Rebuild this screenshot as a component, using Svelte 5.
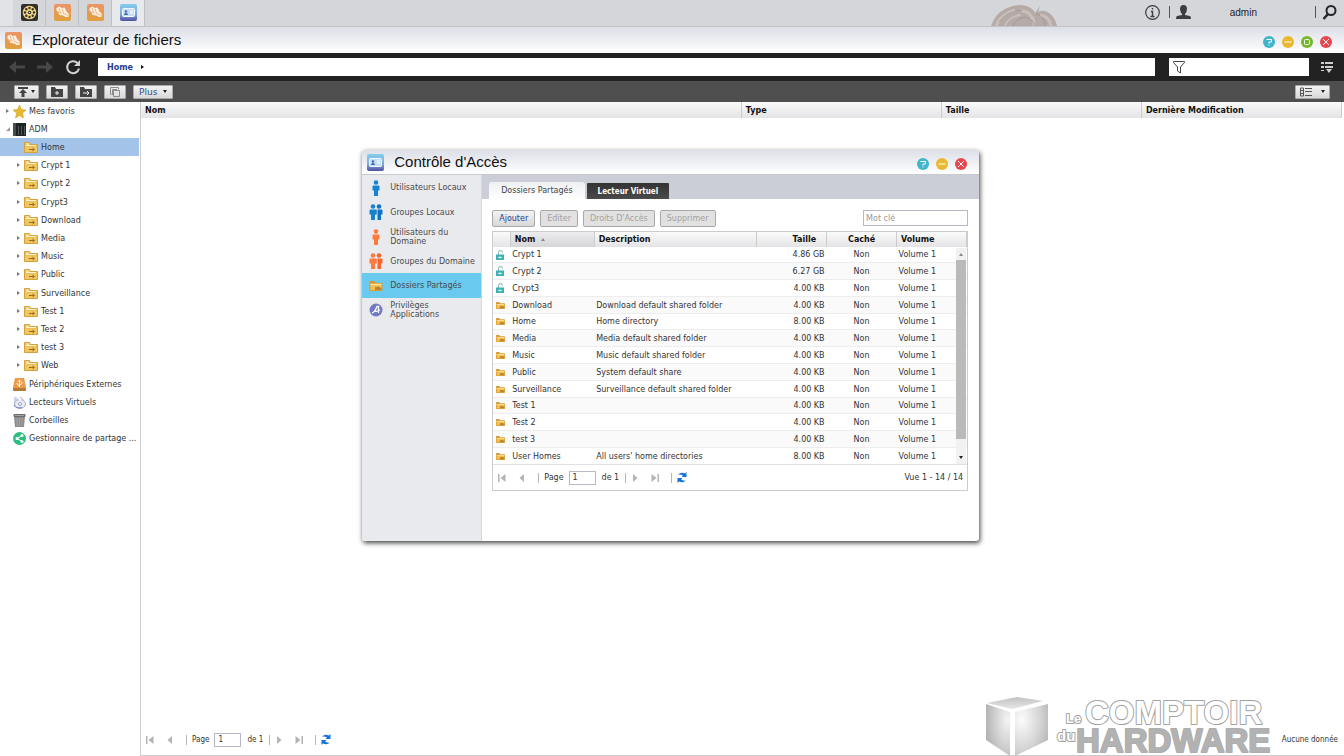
<script lang="ts">
  type Folder = { name: string; description?: string; size: string; locked?: boolean };

  const apps = ['settings', 'explorer', 'explorer', 'access'];

  const shares = [
    'Home', 'Crypt 1', 'Crypt 2', 'Crypt3', 'Download', 'Media', 'Music',
    'Public', 'Surveillance', 'Test 1', 'Test 2', 'test 3', 'Web',
  ];

  const places = [
    { label: 'Périphériques Externes', icon: 'usb' },
    { label: 'Lecteurs Virtuels', icon: 'disc' },
    { label: 'Corbeilles', icon: 'trash' },
    { label: 'Gestionnaire de partage ...', icon: 'share' },
  ];

  const menu = [
    { label: 'Utilisateurs Locaux', icon: 'user-blue' },
    { label: 'Groupes Locaux', icon: 'group-blue' },
    { label: 'Utilisateurs du Domaine', icon: 'user-orange' },
    { label: 'Groupes du Domaine', icon: 'group-orange' },
    { label: 'Dossiers Partagés', icon: 'folder' },
    { label: 'Privilèges Applications', icon: 'apps' },
  ];

  const folders: Folder[] = [
    { name: 'Crypt 1', size: '4.86 GB', locked: true },
    { name: 'Crypt 2', size: '6.27 GB', locked: true },
    { name: 'Crypt3', size: '4.00 KB', locked: true },
    { name: 'Download', description: 'Download default shared folder', size: '4.00 KB' },
    { name: 'Home', description: 'Home directory', size: '8.00 KB' },
    { name: 'Media', description: 'Media default shared folder', size: '4.00 KB' },
    { name: 'Music', description: 'Music default shared folder', size: '4.00 KB' },
    { name: 'Public', description: 'System default share', size: '4.00 KB' },
    { name: 'Surveillance', description: 'Surveillance default shared folder', size: '4.00 KB' },
    { name: 'Test 1', size: '4.00 KB' },
    { name: 'Test 2', size: '4.00 KB' },
    { name: 'test 3', size: '4.00 KB' },
    { name: 'User Homes', description: "All users' home directories", size: '8.00 KB' },
  ];

  let selectedShare = $state('Home');
  let selectedMenu = $state('Dossiers Partagés');
  let keyword = $state('');
  let filter = $state('');
  let mainPage = $state('1');
  let sharePage = $state('1');
</script>

<svelte:head>
  <title>Explorateur de fichiers</title>
</svelte:head>

{#snippet person(x: number, color: string)}
  <g transform="translate({x} 0)" fill={color}>
    <circle cx="4" cy="2.500" r="2.300" />
    <path d="M.5 6.500q0-1 1-1h5q1 0 1 1v4H6V16H2v-5.500H.5z" />
  </g>
{/snippet}

{#snippet appIcon(kind: string, size: number)}
  <svg width={size} height={size} viewBox="0 0 17 17" aria-hidden="true">
    {#if kind === 'settings'}
      <rect width="17" height="17" rx="2" fill="#33302b" />
      <circle cx="8.500" cy="8.500" r="6.800" fill="#f2d984" />
      <g fill="#33302b">
        <circle cx="8.500" cy="4" r="1.200" />
        <circle cx="8.500" cy="13" r="1.200" />
        <circle cx="4" cy="8.500" r="1.200" />
        <circle cx="13" cy="8.500" r="1.200" />
        <circle cx="5.300" cy="5.300" r="1.200" />
        <circle cx="11.700" cy="5.300" r="1.200" />
        <circle cx="5.300" cy="11.700" r="1.200" />
        <circle cx="11.700" cy="11.700" r="1.200" />
        <circle cx="8.500" cy="8.500" r="1.800" />
      </g>
      <circle cx="8.500" cy="8.500" r=".8" fill="#f2d984" />
    {:else if kind === 'explorer'}
      <rect width="17" height="17" rx="2" fill="url(#orange)" />
      <path d="M2.500 4l3-1.500 2 1.500 3-.5 2 4 2.500 2.500-.5 3h-3l-2-1.500-4-.5-1.500-3-1.500-1.500z" fill="#fff1e2" />
      <path d="M5 4l1.500 4M2.500 7.500l5 1.500M8 4.500l1.500 5 5 2" stroke="#eda66a" stroke-width=".8" fill="none" />
    {:else}
      <rect width="17" height="17" rx="2" fill="url(#badge)" />
      <rect x="2.500" y="4.500" width="12" height="8" rx="1" fill="#c3dff4" stroke="#f4faff" />
      <circle cx="6" cy="7.500" r="1.200" fill="#4668b4" />
      <path d="M4 11q0-2 2-2t2 2z" fill="#4668b4" />
      <path d="M10 7h3M10 9h3" stroke="#fff" />
    {/if}
  </svg>
{/snippet}

{#snippet folderIcon(width: number, height: number)}
  <svg {width} {height} viewBox="0 0 14 11" aria-hidden="true">
    <path d="M.5 10.500V.5h5l1 2h7v8z" fill="#edc054" stroke="#d5a13c" />
    <path d="M2 2h3M2 3.500h10" stroke="#fff4cf" />
    <path d="M1 5h12v5H1z" fill="#f0c661" />
    <path d="M5 7.500h5M8.500 6l2 1.500-2 1.500" stroke="#9b6a1e" fill="none" />
  </svg>
{/snippet}

{#snippet sharedIcon(width: number, height: number)}
  <svg {width} {height} viewBox="0 0 14 11" aria-hidden="true">
    <path d="M0 10V1q0-1 1-1h4l1.500 2H13q1 0 1 1v7q0 1-1 1H1q-1 0-1-1z" fill="#d9982f" />
    <path d="M1 3.500h12V10H1z" fill="#f3c14e" />
    <path d="M1 3h12v1.500H1z" fill="#fbe3a0" />
    <path d="M6 6.500h3V5.500L13 8v2H6z" fill="#b98330" />
  </svg>
{/snippet}

{#snippet placeIcon(kind: string)}
  <svg width="13" height="13" viewBox="0 0 13 13" aria-hidden="true">
    {#if kind === 'usb'}
      <path d="M2 0h9l2 9v3q0 1-1 1H1q-1 0-1-1V9z" fill="#ee9a45" />
      <path d="M0 10h13v2q0 1-1 1H1q-1 0-1-1z" fill="#b9793c" />
      <path d="M6.500 9V2M5 3.500L6.500 2 8 3.500M6.500 8L4 6V5M6.500 7L9 5.500V4" stroke="#fff" fill="none" />
    {:else if kind === 'disc'}
      <path d="M1 1h8l2 3v7H1z" fill="#cfd3ee" />
      <ellipse cx="7" cy="8" rx="5.500" ry="4.500" fill="#e8ebf5" stroke="#a9b1c8" />
      <circle cx="7" cy="8" r="1.500" fill="#fff" stroke="#9aa4c0" />
      <path d="M1 9q2 4 8 2.500" stroke="#7586c8" fill="none" />
      <path d="M4 1l4 3" stroke="#fff" stroke-width="2" />
    {:else if kind === 'trash'}
      <path d="M1 2h11l-1 11H2z" fill="#8b8b8b" />
      <path d="M4 4v8M6.500 4v8M9 4v8" stroke="#a9a9a9" />
      <rect x=".5" y="0" width="12" height="3" rx="1" fill="#6d6d6d" />
      <path d="M2 1.500h9" stroke="#a5a5a5" />
    {:else}
      <circle cx="6.500" cy="6.500" r="6.500" fill="#2cbd80" />
      <path d="M9 3.500l-5 3 5 3" stroke="#fff" fill="none" />
      <circle cx="9" cy="3.500" r="1.500" fill="#fff" />
      <circle cx="4" cy="6.500" r="1.500" fill="#fff" />
      <circle cx="9" cy="9.500" r="1.500" fill="#fff" />
    {/if}
  </svg>
{/snippet}

{#snippet winButton(kind: string, label: string)}
  <button class="round" aria-label={label}>
    <svg width="12" height="12" viewBox="0 0 12 12" fill="none" stroke="#fff" aria-hidden="true">
      {#if kind === 'help'}
        <circle cx="6" cy="6" r="6" fill="#43b5cb" stroke="none" />
        <path d="M3.500 3.500h5v2.500H6v1.500M6 8.500v1" />
      {:else if kind === 'min'}
        <circle cx="6" cy="6" r="6" fill="#eab932" stroke="none" />
        <path d="M2.500 6h7" />
      {:else if kind === 'max'}
        <circle cx="6" cy="6" r="6" fill="#77b72d" stroke="none" />
        <rect x="3.500" y="3.500" width="5" height="5" rx="1" />
      {:else}
        <circle cx="6" cy="6" r="6" fill="#e7474f" stroke="none" />
        <path d="M3 3l6 6M9 3L3 9" />
      {/if}
    </svg>
  </button>
{/snippet}

{#snippet pagerIcon(kind: string, label: string)}
  <button class="page-btn" aria-label={label}>
    <svg width="8" height="8" viewBox="0 0 8 8" fill="#b4b4b4" aria-hidden="true">
      {#if kind === 'first'}
        <path d="M0 0h1.500v8H0zM7.500 0v8L2.500 4z" />
      {:else if kind === 'prev'}
        <path d="M6 0v8L1.500 4z" />
      {:else if kind === 'next'}
        <path d="M2 0v8l4.500-4z" />
      {:else}
        <path d="M6.500 0H8v8H6.500zM.5 0v8l5-4z" />
      {/if}
    </svg>
  </button>
{/snippet}

{#snippet refreshIcon()}
  <button class="page-btn refresh" aria-label="Actualiser">
    <svg width="10" height="11" viewBox="0 0 10 11" fill="#1673d6" aria-hidden="true">
      <path d="M1 2.500Q4-.5 8 1.500L9.500 0v5H4.500L6 3.500Q4 2 1 2.500z" />
      <path d="M9 8.500Q6 11.500 2 9.500L.5 11V6h5L4 7.500Q6 9 9 8.500z" />
    </svg>
  </button>
{/snippet}

<svg class="defs" width="0" height="0" aria-hidden="true">
  <defs>
    <linearGradient id="orange" x2="0" y2="1">
      <stop stop-color="#eb9468" />
      <stop offset="1" stop-color="#e0a03c" />
    </linearGradient>
    <linearGradient id="badge" x2="0" y2="1">
      <stop stop-color="#82cdec" />
      <stop offset=".6" stop-color="#7fa8da" />
      <stop offset="1" stop-color="#514f9f" />
    </linearGradient>
    <radialGradient id="cube-left" cx=".9" cy=".3" r=".9">
      <stop stop-color="#f4f4f4" />
      <stop offset=".6" stop-color="#cfcfcf" />
      <stop offset="1" stop-color="#b4b4b4" />
    </radialGradient>
    <radialGradient id="cube-right" cx=".2" cy=".3" r=".9">
      <stop stop-color="#fcfcfc" />
      <stop offset=".6" stop-color="#d6d6d6" />
      <stop offset="1" stop-color="#b8b8b8" />
    </radialGradient>
    <linearGradient id="cube-top" x2="0" y2="1">
      <stop stop-color="#c2c2c2" />
      <stop offset="1" stop-color="#e6e6e6" />
    </linearGradient>
  </defs>
</svg>

<div class="desktop">
  <header class="taskbar">
    <nav class="running" aria-label="Applications ouvertes">
      {#each apps as app, i}
        <button class="task" class:current={i === 3} aria-label={app}>{@render appIcon(app, 17)}</button>
      {/each}
    </nav>
    <svg class="hair" width="66" height="24" viewBox="0 0 66 24" aria-hidden="true">
      <path d="M0 24Q4 12 14 7Q27 0 38 5Q43 8 44 11L49 4 47 10Q52 7 58 11Q64 15 66 24z" fill="#b5aaa6" />
      <g fill="none" stroke="#d0c8c5" opacity=".7">
        <path d="M5 24Q10 12 24 8M30 8Q44 12 43 24M49 13Q58 14 60 24" stroke-width="3" />
        <path d="M14 24Q18 14 30 13" stroke-width="2" />
      </g>
      <path d="M8 20Q16 9 32 8M22 24Q24 17 34 15Q42 17 44 24M45 12Q54 14 54 24" stroke="#9c918d" fill="none" opacity=".7" />
    </svg>
    <button class="tool" aria-label="Informations">
      <svg width="15" height="15" viewBox="0 0 15 15" fill="none" stroke="#3d3d40" aria-hidden="true">
        <circle cx="7.500" cy="7.500" r="6.800" stroke-width="1.200" />
        <path d="M7.500 3v1.500M6 6.500h1.500V11M5.500 11.500h4" stroke-width="1.400" />
      </svg>
    </button>
    <span class="bar"></span>
    <button class="account">
      <svg width="15" height="14" viewBox="0 0 15 14" fill="#3d3d40" aria-hidden="true">
        <path d="M4 4q0-4 3.500-4T11 4q0 3-2 5v1l5 1q1 .5 1 3H0q0-2.500 1-3l5-1V9Q4 7 4 4z" />
      </svg>
      <span>admin</span>
    </button>
    <span class="bar"></span>
    <button class="tool" aria-label="Rechercher">
      <svg width="15" height="15" viewBox="0 0 15 15" fill="none" stroke="#252528" aria-hidden="true">
        <circle cx="9" cy="5.500" r="4.500" stroke-width="2" />
        <path d="M6 9l-4.500 5" stroke-width="2.500" />
      </svg>
    </button>
  </header>

  <div class="titlebar">
    {@render appIcon('explorer', 17)}
    <h1>Explorateur de fichiers</h1>
    <div class="controls">
      {@render winButton('help', 'Aide')}
      {@render winButton('min', 'Réduire')}
      {@render winButton('max', 'Agrandir')}
      {@render winButton('close', 'Fermer')}
    </div>
  </div>

  <div class="addressbar">
    <button class="nav-btn" aria-label="Précédent">
      <svg width="16" height="12" viewBox="0 0 16 12" fill="#474747" aria-hidden="true"><path d="M0 6l7-6v4.500h9v3H7V12z" /></svg>
    </button>
    <button class="nav-btn" aria-label="Suivant">
      <svg width="16" height="12" viewBox="0 0 16 12" fill="#474747" aria-hidden="true"><path d="M16 6L9 0v4.500H0v3h9V12z" /></svg>
    </button>
    <button class="nav-btn" aria-label="Actualiser">
      <svg width="16" height="16" viewBox="0 0 16 16" aria-hidden="true">
        <path d="M12.500 4A6 6 0 1 0 14 9.500" fill="none" stroke="#d2d2d2" stroke-width="2" />
        <path d="M15 1v6H9z" fill="#d2d2d2" />
      </svg>
    </button>
    <nav class="path" aria-label="Chemin"><a href="#home">Home</a><span class="caret right"></span></nav>
    <div class="filter">
      <svg width="12" height="13" viewBox="0 0 12 13" fill="none" stroke="#444" aria-hidden="true">
        <path d="M.5.5h11v1L7.500 6v6l-3-2V6l-4-4.500z" />
      </svg>
      <input type="text" aria-label="Filtrer" bind:value={filter} />
    </div>
    <button class="nav-btn options" aria-label="Options">
      <svg width="12" height="12" viewBox="0 0 12 12" fill="#cfcfcf" aria-hidden="true">
        <path d="M0 1h3v2H0zM0 5h3v2H0zM0 9h3v1H0zM4 1h8v2H4zM4 5h8v2H4zM5 8h6l-3 4z" />
      </svg>
    </button>
  </div>

  <div class="toolbar">
    <button class="chip upload" aria-label="Envoyer">
      <svg width="10" height="10" viewBox="0 0 10 10" fill="#444" aria-hidden="true"><path d="M0 0h10v2H0zM5 2l4 4H6.500v4h-3V6H1z" /></svg>
      <span class="caret down"></span>
    </button>
    <button class="chip" aria-label="Nouveau dossier">
      <svg width="12" height="10" viewBox="0 0 12 10" aria-hidden="true"><path d="M0 0h4l1 2h7v8H0z" fill="#444" /><path d="M4 6h4M6 4v4" stroke="#eee" /></svg>
    </button>
    <button class="chip" aria-label="Déplacer">
      <svg width="12" height="10" viewBox="0 0 12 10" aria-hidden="true"><path d="M0 0h4l1 2h7v8H0z" fill="#444" /><path d="M3 6h5M7 4l2 2-2 2" stroke="#eee" fill="none" /></svg>
    </button>
    <button class="chip" aria-label="Copier">
      <svg width="12" height="10" viewBox="0 0 12 10" fill="none" stroke="#8b8b8b" aria-hidden="true"><path d="M2.500 7.500h-1v-7h8v2M4.500 3.500h6v6h-6zM3.500 8V2.500H8" /></svg>
    </button>
    <button class="chip plus">Plus<span class="caret down"></span></button>
    <button class="chip view" aria-label="Affichage">
      <svg width="12" height="10" viewBox="0 0 12 10" fill="none" stroke="#555" aria-hidden="true"><path d="M.5 1v8h3V1zM1 3.500h2M1 6.500h2M5 1.500h7M5 4.500h7M5 8.500h7" /></svg>
      <span class="caret down"></span>
    </button>
  </div>

  <div class="workspace">
    <aside class="tree">
      <button class="node">
        <span class="caret right grey"></span>
        <svg width="13" height="13" viewBox="0 0 13 13" aria-hidden="true"><path d="M6.500 0l2 4.500 4.500.5-3.500 3 1 5-4-2.500-4 2.500 1-5L0 5l4.500-.5z" fill="#e8b82e" stroke="#c99824" stroke-width=".5" /></svg>
        Mes favoris
      </button>
      <button class="node">
        <span class="caret corner"></span>
        <svg width="13" height="13" viewBox="0 0 13 13" aria-hidden="true"><path d="M0 0h13v13H0z" fill="#1d2323" /><path d="M0 0h3v13H0z" fill="#41504d" /><path d="M5.500 3v9M8.500 3v9M11.500 3v9" stroke="#56595c" /></svg>
        ADM
      </button>
      {#each shares as share}
        <button class="node child" class:selected={share === selectedShare} onclick={() => (selectedShare = share)}>
          {#if share === 'Home'}<span class="blank"></span>{:else}<span class="caret right grey"></span>{/if}
          {@render folderIcon(14, 11)}
          {share}
        </button>
      {/each}
      {#each places as place}
        <button class="node">
          <span class="blank"></span>
          {@render placeIcon(place.icon)}
          {place.label}
        </button>
      {/each}
    </aside>

    <main class="files">
      <table class="file-head">
        <colgroup><col class="wide" /><col /><col /><col /></colgroup>
        <thead>
          <tr><th>Nom</th><th>Type</th><th>Taille</th><th>Dernière Modification</th></tr>
        </thead>
      </table>
      <footer class="pager main-pager">
        {@render pagerIcon('first', 'Première page')}
        {@render pagerIcon('prev', 'Page précédente')}
        <span class="sep"></span>
        <label>Page <input type="text" bind:value={mainPage} /></label>
        <span>de 1</span>
        <span class="sep"></span>
        {@render pagerIcon('next', 'Page suivante')}
        {@render pagerIcon('last', 'Dernière page')}
        <span class="sep"></span>
        {@render refreshIcon()}
        <span class="status">Aucune donnée</span>
      </footer>
    </main>
  </div>

  <section class="window" aria-label="Contrôle d'Accès">
    <div class="window-title">
      {@render appIcon('access', 17)}
      <h2>Contrôle d'Accès</h2>
      <div class="controls">
        {@render winButton('help', 'Aide')}
        {@render winButton('min', 'Réduire')}
        {@render winButton('close', 'Fermer')}
      </div>
    </div>
    <div class="window-body">
      <nav class="menu" aria-label="Sections">
        {#each menu as item}
          <button class:selected={item.label === selectedMenu} onclick={() => (selectedMenu = item.label)}>
            {#if item.icon === 'folder'}
              {@render sharedIcon(14, 10)}
            {:else}
              <svg width="14" height="16" viewBox="0 0 14 16" aria-hidden="true">
                {#if item.icon === 'user-blue'}
                  {@render person(3, '#1583cf')}
                {:else if item.icon === 'user-orange'}
                  {@render person(3, '#ff7a3c')}
                {:else if item.icon === 'group-blue'}
                  {@render person(6, '#0f74c0')}
                  <path d="M8 5v11" stroke="#e9eaee" />
                  {@render person(0, '#1583cf')}
                {:else if item.icon === 'group-orange'}
                  {@render person(6, '#f4652f')}
                  <path d="M8 5v11" stroke="#e9eaee" />
                  {@render person(0, '#ff7a3c')}
                {:else}
                  <circle cx="7" cy="8" r="6.500" fill="#7479c4" />
                  <path d="M3 11q3-1 5-6.500h1.500V11M5 9q3 1 6-1" stroke="#fff" stroke-width="1.300" fill="none" />
                {/if}
              </svg>
            {/if}
            <span>{item.label}</span>
          </button>
        {/each}
      </nav>

      <div class="panel">
        <div class="tabs" role="tablist">
          <button role="tab" aria-selected="true" class="tab active">Dossiers Partagés</button>
          <button role="tab" aria-selected="false" class="tab">Lecteur Virtuel</button>
        </div>
        <div class="content">
          <div class="actions">
            <button class="action">Ajouter</button>
            <button class="action" disabled>Editer</button>
            <button class="action" disabled>Droits D'Accès</button>
            <button class="action" disabled>Supprimer</button>
            <input type="text" aria-label="Mot clé" placeholder="Mot clé" bind:value={keyword} />
          </div>
          <div class="grid">
            <div class="rows">
              <table>
                <colgroup>
                  <col class="c-icon" /><col class="c-name" /><col />
                  <col class="c-small" /><col class="c-small" /><col class="c-small" />
                </colgroup>
                <thead>
                  <tr>
                    <th aria-label="État"></th>
                    <th class="sorted">Nom <span class="caret up"></span></th>
                    <th>Description</th>
                    <th class="size">Taille</th>
                    <th class="hidden-col">Caché</th>
                    <th>Volume</th>
                  </tr>
                </thead>
                <tbody>
                  {#each folders as folder}
                    <tr>
                      <td class="state">
                        {#if folder.locked}
                          <svg width="8" height="10" viewBox="0 0 8 10" aria-hidden="true">
                            <path d="M2.500 5V2.500q0-2 2-2t2 2" fill="none" stroke="#7fb4b6" />
                            <path d="M0 4.500h8V10H0z" fill="#3fb0b5" />
                            <path d="M4 6v2.500M2 7.500h4" stroke="#c7f0ee" />
                          </svg>
                        {:else}
                          {@render sharedIcon(9, 7)}
                        {/if}
                      </td>
                      <td>{folder.name}</td>
                      <td>{folder.description ?? ''}</td>
                      <td class="size">{folder.size}</td>
                      <td class="hidden-col">Non</td>
                      <td>Volume 1</td>
                    </tr>
                  {/each}
                </tbody>
              </table>
              <div class="scrollbar" aria-hidden="true">
                <span class="arrow"><span class="caret up"></span></span>
                <span class="thumb"></span>
                <span class="arrow end"><span class="caret down"></span></span>
              </div>
            </div>
            <footer class="pager">
              {@render pagerIcon('first', 'Première page')}
              {@render pagerIcon('prev', 'Page précédente')}
              <span class="sep"></span>
              <label>Page <input type="text" bind:value={sharePage} /></label>
              <span>de 1</span>
              <span class="sep"></span>
              {@render pagerIcon('next', 'Page suivante')}
              {@render pagerIcon('last', 'Dernière page')}
              <span class="sep"></span>
              {@render refreshIcon()}
              <span class="status">Vue 1 - 14 / 14</span>
            </footer>
          </div>
        </div>
      </div>
    </div>
  </section>

  <svg class="watermark" width="290" height="66" viewBox="0 -6 290 66" role="img" aria-label="Le Comptoir du Hardware">
    <path d="M3 7L33 1l26 4-31 8z" fill="url(#cube-top)" />
    <path d="M2 8l24 8v44L2 44z" fill="url(#cube-left)" />
    <path d="M31 16l33-8v36L31 60z" fill="url(#cube-right)" />
    <g font-family="'Liberation Sans', sans-serif" font-weight="bold" stroke="#a2a2a2" stroke-width="2" stroke-linejoin="round" paint-order="stroke" fill="#fff">
      <text x="82" y="27" font-size="13">Le</text>
      <text x="73" y="45" font-size="15">du</text>
      <text x="101" y="28" font-size="33">COMPTOIR</text>
      <text x="92" y="56" font-size="33" fill="#b2b2b2" stroke="#adadad">HARDWARE</text>
    </g>
  </svg>
</div>

<style>
  :global(body) {
    margin: 0;
    background: #fff;
  }
  .defs {
    position: absolute;
  }
  .desktop {
    position: relative;
    display: flex;
    flex-direction: column;
    min-height: 100vh;
    box-sizing: border-box;
    font-family: 'DejaVu Sans', Verdana, sans-serif;
    font-size: 8px;
    color: #333;
  }
  button,
  input {
    font: inherit;
    color: inherit;
    box-sizing: border-box;
  }
  button {
    margin: 0;
    padding: 0;
    border: 0;
    background: none;
    cursor: pointer;
  }
  svg {
    display: block;
    flex: none;
  }
  h1,
  h2 {
    margin: 0;
    padding-bottom: 2px;
    font: 15px 'Liberation Sans', Arial, sans-serif;
    color: #111;
  }

  .caret {
    flex: none;
    width: 0;
    height: 0;
    border: 2px solid transparent;
  }
  .caret.right {
    border-left: 3px solid #111;
    border-right: 0;
  }
  .caret.right.grey {
    border-left-color: #777;
    margin-right: 1px;
  }
  .caret.down {
    border-top: 3px solid #222;
    border-bottom: 0;
  }
  .caret.up {
    display: inline-block;
    border-bottom: 3px solid #888;
    border-top: 0;
  }
  .caret.corner {
    border-right-color: #999;
    border-bottom-color: #999;
  }

  .taskbar {
    display: flex;
    align-items: center;
    height: 24px;
    padding: 0 7px 2px 0;
    background: #d5d6da;
    border-bottom: 1px solid #c4c4c8;
  }
  .running {
    display: flex;
    align-self: flex-start;
    height: 26px;
    margin-right: auto;
    border-left: 13px solid #e2e3e6;
  }
  .task {
    display: flex;
    align-items: center;
    justify-content: center;
    width: 33px;
    padding-bottom: 1px;
    border-right: 1px solid #c0c1c6;
  }
  .task.current {
    background: #e8e9ec;
  }
  .hair {
    align-self: flex-end;
    margin: 0 88px -2px 0;
  }
  .bar {
    width: 1px;
    height: 12px;
    background: #555;
    margin: 0 6px 0 9px;
  }
  .account {
    display: flex;
    align-items: center;
    gap: 39px;
    padding-right: 49px;
    font: 10px 'Liberation Sans', Arial, sans-serif;
    color: #222;
  }
  .titlebar,
  .window-title {
    display: flex;
    align-items: center;
    background: linear-gradient(#dcdfe7, #fff);
  }
  .titlebar {
    height: 26px;
    padding: 0 12px 0 5px;
    gap: 10px;
  }
  .controls {
    display: flex;
    gap: 7px;
    margin-left: auto;
    padding-top: 3px;
  }

  .addressbar {
    display: flex;
    align-items: center;
    height: 28px;
    padding: 0 11px 0 9px;
    background: #222;
  }
  .nav-btn {
    margin-right: 12px;
  }
  .path {
    display: flex;
    align-items: center;
    flex: 1;
    gap: 8px;
    height: 18px;
    margin: 0 14px 0 5px;
    padding-left: 9px;
    background: #fff;
    font-weight: bold;
  }
  .path a {
    color: #1d3f94;
    text-decoration: none;
  }
  .filter {
    display: flex;
    align-items: center;
    width: 140px;
    height: 18px;
    padding-left: 4px;
    box-sizing: border-box;
    background: #fff;
  }
  .filter input {
    flex: 1;
    min-width: 0;
    border: 0;
    outline: 0;
    background: none;
  }
  .options {
    margin: 0 0 0 12px;
  }

  .toolbar {
    display: flex;
    align-items: center;
    gap: 7px;
    height: 21px;
    padding: 0 14px;
    background: #4f4f4f;
  }
  .chip {
    display: flex;
    align-items: center;
    gap: 6px;
    height: 14px;
    padding: 0 4px;
    background: linear-gradient(#f2f2f2, #d9d9d9);
    border: 1px solid #aaa;
    border-radius: 1px;
  }
  .chip.upload {
    gap: 3px;
    padding: 0 3px;
  }
  .chip.plus {
    padding: 0 5px;
    font-size: 9px;
    color: #304f92;
  }
  .chip.view {
    gap: 9px;
    margin-left: auto;
  }

  .workspace {
    display: flex;
    flex: 1;
  }
  .tree {
    display: flex;
    flex-direction: column;
    width: 140px;
    border-right: 1px solid #ccc;
  }
  .node {
    display: flex;
    align-items: center;
    gap: 3px;
    height: 18px;
    margin-right: 1px;
    padding-left: 6px;
    text-align: left;
    white-space: nowrap;
  }
  .node:nth-child(5n) {
    margin-bottom: 1px;
  }
  .node .blank {
    width: 4px;
  }
  .node.child {
    padding-left: 17px;
  }
  .node.selected {
    background: #a4c3e8;
  }
  .files {
    display: flex;
    flex: 1;
    flex-direction: column;
    justify-content: space-between;
    padding-right: 2px;
    border-bottom: 1px solid #ccc;
  }
  table {
    width: 100%;
    border-collapse: collapse;
    table-layout: fixed;
  }
  th {
    padding: 0 4px;
    color: #111;
    text-align: left;
    white-space: nowrap;
    background: linear-gradient(#fafafa, #e4e4e6);
    border-right: 1px solid #ccc;
  }
  .file-head th {
    height: 16px;
  }
  .file-head .wide {
    width: 50%;
  }

  .pager {
    display: flex;
    align-items: center;
    height: 25px;
    padding: 0 4px 0 5px;
  }
  .main-pager {
    height: 31px;
    font-family: 'DejaVu Sans Condensed', 'DejaVu Sans', sans-serif;
  }
  .page-btn {
    margin-right: 12px;
  }
  .page-btn.refresh {
    margin: 0;
  }
  .sep {
    width: 1px;
    height: 10px;
    margin: 0 5px 0 6px;
    background: #b5b5b5;
  }
  .page-btn + .sep {
    margin-left: 0;
  }
  .pager label {
    display: flex;
    align-items: center;
    gap: 5px;
    margin-right: 6px;
  }
  .pager input {
    width: 27px;
    height: 14px;
    padding: 0 3px;
    border: 1px solid #b5b8c8;
  }
  .status {
    margin-left: auto;
  }

  .window {
    position: absolute;
    top: 150px;
    left: 26.95%;
    width: 45.9%;
    background: #fff;
    border-radius: 3px;
    box-shadow: 1px 2px 5px rgba(0, 0, 0, 0.75);
  }
  .window-title {
    height: 24px;
    padding: 0 12px 0 5px;
    gap: 10px;
    border-radius: 3px 3px 0 0;
    border-bottom: 1px solid #c8cad0;
  }
  .window-body {
    display: flex;
  }
  .menu {
    display: flex;
    flex-direction: column;
    width: 119px;
    background: #e9eaee;
    border-right: 1px solid #d6d8dd;
    border-radius: 0 0 0 3px;
  }
  .menu button {
    display: flex;
    align-items: center;
    gap: 7px;
    height: 25px;
    padding: 0 4px 0 7px;
    line-height: 9px;
    text-align: left;
    color: #4a4a4a;
  }
  .menu button:nth-child(even) {
    height: 24px;
  }
  .menu button.selected {
    background: #69c9ee;
  }
  .panel {
    flex: 1;
    min-width: 0;
  }
  .tabs {
    display: flex;
    align-items: flex-end;
    gap: 2px;
    height: 24px;
    padding-left: 7px;
    background: #cbced6;
  }
  .tab {
    height: 16px;
    padding: 0 11px;
    color: #fff;
    font: bold 8px 'DejaVu Sans Condensed', 'DejaVu Sans', sans-serif;
    background: linear-gradient(#333, #4a4a4a);
    border-radius: 1px 1px 0 0;
  }
  .tab.active {
    height: 17px;
    padding: 0 12px;
    color: #444;
    font: 8px 'DejaVu Sans', sans-serif;
    background: linear-gradient(#eff0f2, #fff);
    border-radius: 3px 3px 0 0;
  }
  .content {
    padding: 11px 11px 50px 10px;
  }
  .actions {
    display: flex;
    gap: 5px;
    margin-bottom: 4px;
  }
  .action {
    height: 17px;
    padding: 0 6px;
    color: #274391;
    background: linear-gradient(#f3f3f3, #d8d8d8);
    border: 1px solid #a9a9a9;
    border-radius: 2px;
  }
  .action:disabled {
    color: #a2a2a2;
    background: #e1e1e1;
    cursor: default;
  }
  .actions input {
    width: 105px;
    height: 16px;
    margin-left: auto;
    padding: 0 2px;
    border: 1px solid #b5b8c8;
    border-radius: 0;
  }
  .actions input::placeholder {
    color: #999;
  }
  .grid {
    border: 1px solid #ccc;
  }
  .rows {
    position: relative;
    border-bottom: 1px solid #e2e2e2;
  }
  .rows th {
    height: 15px;
  }
  .rows th.sorted {
    background: linear-gradient(#ececee, #d6d6d8);
  }
  .sorted .caret {
    margin: 0 0 1px 3px;
  }
  .rows td {
    height: 16px;
    padding: 0 2px;
    white-space: nowrap;
    border-top: 1px solid #ededed;
  }
  .rows tbody tr:first-child td {
    height: 15px;
    border-top: 0;
  }
  .rows tbody tr:nth-child(5n) td {
    height: 15px;
  }
  .rows tbody tr:nth-child(even) {
    background: #fafafa;
  }
  .rows td.state {
    padding: 0 3px;
  }
  .c-icon {
    width: 17px;
  }
  .c-name {
    width: 84px;
  }
  .c-small {
    width: 70px;
  }
  .rows th.size {
    padding-right: 10px;
  }
  .size {
    text-align: right;
  }
  .hidden-col {
    text-align: center;
  }
  .scrollbar {
    position: absolute;
    top: 16px;
    right: 1px;
    bottom: 0;
    display: flex;
    flex-direction: column;
    width: 10px;
    background: #f1f1f1;
  }
  .arrow {
    display: flex;
    align-items: center;
    justify-content: center;
    height: 12px;
  }
  .arrow.end {
    height: 13px;
  }
  .thumb {
    flex: 1;
    margin-bottom: 12px;
    background: #bababa;
  }
  .watermark {
    position: absolute;
    right: 70px;
    bottom: 0;
    overflow: visible;
  }
</style>
